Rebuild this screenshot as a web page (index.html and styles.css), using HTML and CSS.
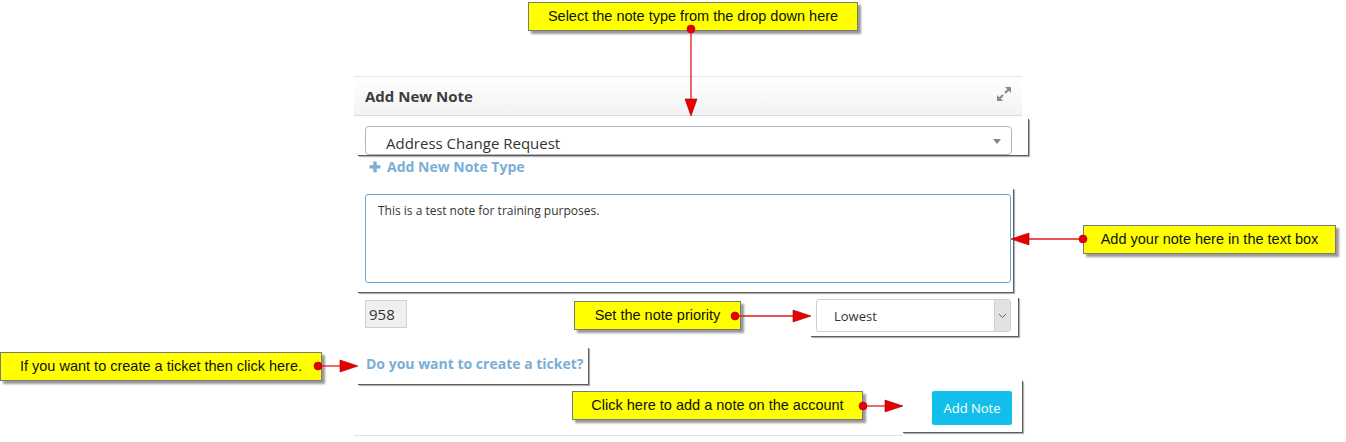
FILE: index.html
```html
<!DOCTYPE html>
<html>
<head>
<meta charset="utf-8">
<link rel="stylesheet" href="styles.css">
</head>
<body>
<div class="page">
  <div class="form">
    <div class="panel-head">
      <span class="title">Add New Note</span>
      <svg class="expand" width="16" height="16" viewBox="0 0 16 16">
        <path d="M9 1H15V7Z" fill="#8a8a8a"/>
        <path d="M12.5 3.5L9 7" stroke="#8a8a8a" stroke-width="2.2"/>
        <path d="M1 9V15H7Z" fill="#8a8a8a"/>
        <path d="M3.5 12.5L7 9" stroke="#8a8a8a" stroke-width="2.2"/>
      </svg>
    </div>
    <div class="frame frame-type">
      <div class="select">Address Change Request<span class="caret"></span></div>
    </div>
    <div class="add-type"><span class="plus">&#10010;</span>Add New Note Type</div>
    <div class="frame frame-text">
      <div class="textarea">This is a test note for training purposes.</div>
    </div>
    <div class="row">
      <div class="count">958</div>
      <div class="frame frame-prio">
        <div class="prio">Lowest<span class="chev"><svg width="9" height="6" viewBox="0 0 9 6"><path d="M1 1L4.5 4.5L8 1" fill="none" stroke="#666" stroke-width="1"/></svg></span></div>
      </div>
    </div>
    <div class="frame frame-ticket"><span class="ticket">Do you want to create a ticket?</span></div>
    <div class="footer">
      <div class="footer-line"></div>
      <div class="frame frame-btn"><div class="btn">Add Note</div></div>
    </div>
  </div>

  <div class="callout c1">Select the note type from the drop down here</div>
  <div class="callout c2">Add your note here in the text box</div>
  <div class="callout c3">Set the note priority</div>
  <div class="callout c4">If you want to create a ticket then click here.</div>
  <div class="callout c5">Click here to add a note on the account</div>

  <svg class="arrows" width="1346" height="442" viewBox="0 0 1346 442">
    <g stroke="#e21a1a" stroke-width="1.3" fill="none">
      <line x1="691" y1="29" x2="691" y2="100"/>
      <line x1="1083" y1="239" x2="1028" y2="239"/>
      <line x1="735" y1="316" x2="793" y2="316"/>
      <line x1="318" y1="366" x2="340" y2="366"/>
      <line x1="863" y1="406" x2="885" y2="406"/>
    </g>
    <g fill="#e80000" stroke="#a00000" stroke-width="0.6">
      <polygon points="685,99 697,99 691,116"/>
      <polygon points="1029,233 1029,245 1011,239"/>
      <polygon points="793,310 793,322 811,316"/>
      <polygon points="340,360 340,372 358,366"/>
      <polygon points="885,400 885,412 903,406"/>
    </g>
    <g fill="#e80000" stroke="#b00000" stroke-width="0.6">
      <circle cx="691" cy="29" r="4"/>
      <circle cx="1083" cy="239" r="4"/>
      <circle cx="735" cy="316" r="4"/>
      <circle cx="318" cy="366" r="4"/>
      <circle cx="863" cy="406" r="4"/>
    </g>
  </svg>
</div>
</body>
</html>
```

FILE: styles.css
```css
* { box-sizing: border-box; }

html, body {
  margin: 0;
  padding: 0;
  background: #fff;
}

.page {
  position: relative;
  width: 1346px;
  height: 442px;
  overflow: hidden;
  font-family: "Open Sans", "Liberation Sans", sans-serif;
}

.form {
  margin-left: 354px;
  width: 668px;
  padding-top: 76px;
}

.panel-head {
  height: 40px;
  border-top: 1px solid #e6e6e6;
  border-bottom: 1px solid #dcdcdc;
  background: linear-gradient(#ffffff, #f2f2f2);
  display: flex;
  align-items: center;
  justify-content: space-between;
  padding: 0 10px 0 11px;
}

.title {
  font-size: 15px;
  font-weight: 700;
  color: #3c3c3c;
}

.expand {
  margin-top: -4px;
}

.frame {
  background: #fff;
  box-shadow: 1px 1px 0 #5c5c5c, 2px 2px 1px #b5b5b5;
}

.frame-type {
  margin-top: 2px;
  margin-left: 3px;
  width: 671px;
  height: 37px;
  padding: 8px 0 0 8px;
  overflow: hidden;
}

.select {
  position: relative;
  width: 647px;
  height: 29px;
  border: 1px solid #b4b4b4;
  border-radius: 4px;
  padding: 6px 0 0 20px;
  font-size: 15px;
  line-height: 20px;
  color: #333;
}

.caret {
  position: absolute;
  right: 10px;
  top: 12px;
  width: 0;
  height: 0;
  border-left: 4px solid transparent;
  border-right: 4px solid transparent;
  border-top: 5px solid #888;
}

.add-type {
  margin-top: 2px;
  margin-left: 15px;
  height: 20px;
  font-size: 14px;
  font-weight: 700;
  line-height: 20px;
  color: #7aaed6;
}

.plus {
  font-size: 14px;
  margin-right: 6px;
}

.frame-text {
  margin-top: 11px;
  margin-left: 3px;
  width: 656px;
  height: 104px;
  padding: 6px 0 0 8px;
}

.textarea {
  width: 646px;
  height: 89px;
  border: 1px solid #6aa9dc;
  border-radius: 3px;
  padding: 7px 0 0 12px;
  font-size: 12px;
  line-height: 17px;
  color: #333;
}

.row {
  margin-top: 5px;
  height: 39px;
  display: flex;
  justify-content: space-between;
  align-items: flex-start;
}

.count {
  margin-top: 3px;
  margin-left: 11px;
  width: 42px;
  height: 28px;
  background: #efefef;
  border: 1px solid #cfcfcf;
  font-size: 15px;
  line-height: 26px;
  padding-left: 3px;
  color: #333;
}

.frame-prio {
  margin-right: 4px;
  width: 208px;
  height: 39px;
  padding: 2px 0 0 6px;
}

.prio {
  position: relative;
  width: 195px;
  height: 33px;
  border: 1px solid #cfcfcf;
  border-radius: 3px;
  font-size: 13px;
  line-height: 32px;
  padding-left: 17px;
  color: #333;
}

.chev {
  position: absolute;
  right: 0;
  top: 0;
  width: 16px;
  height: 31px;
  background: #e2e2e2;
  border-left: 1px solid #cfcfcf;
  display: flex;
  align-items: center;
  justify-content: center;
}

.frame-ticket {
  margin-top: 11px;
  margin-left: 3px;
  width: 231px;
  height: 37px;
  padding: 5px 0 0 9px;
}

.ticket {
  font-size: 14px;
  font-weight: 700;
  line-height: 20px;
  color: #7aaed6;
}

.footer {
  margin-top: -4px;
  display: flex;
  align-items: flex-end;
}

.footer-line {
  width: 548px;
  height: 56px;
  border-bottom: 1px solid #e3e3e3;
}

.frame-btn {
  width: 120px;
  height: 52px;
  margin-bottom: 4px;
  padding: 11px 0 0 30px;
}

.btn {
  width: 80px;
  height: 34px;
  background: #12bfea;
  border-radius: 2px;
  color: #fff;
  font-size: 13px;
  line-height: 34px;
  text-align: center;
}

.callout {
  position: absolute;
  height: 29px;
  background: #ffff00;
  border: 1px solid #7a7a7a;
  box-shadow: 3px 3px 2px #9a9a9a;
  font-family: "Liberation Sans", Arial, sans-serif;
  font-size: 14.5px;
  line-height: 27px;
  color: #111;
  text-align: center;
  white-space: nowrap;
}

.c1 { left: 528px; top: 2px; width: 330px; }
.c2 { left: 1083px; top: 225px; width: 253px; }
.c3 { left: 574px; top: 301px; width: 167px; }
.c4 { left: 0; top: 352px; width: 322px; }
.c5 { left: 572px; top: 391px; width: 291px; }

.arrows {
  position: absolute;
  left: 0;
  top: 0;
  pointer-events: none;
}
```
